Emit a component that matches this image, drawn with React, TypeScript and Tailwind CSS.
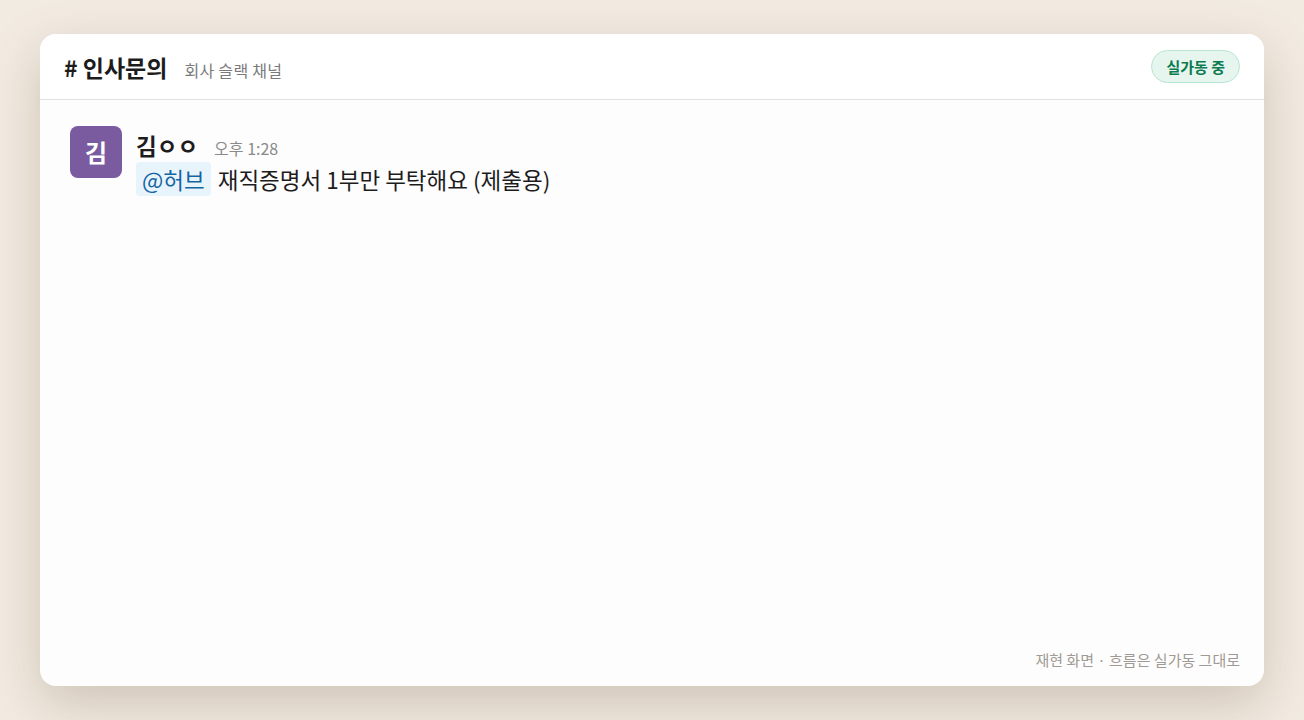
import React from 'react';

const font = { fontFamily: '"Noto Sans CJK KR", "Noto Sans", sans-serif' };

const ChannelHeader: React.FC = () => (
  <div className="flex h-[66px] items-center justify-between border-b border-[#e2e2e2] bg-white px-6">
    <div className="flex items-baseline gap-[17px]">
      <h1 className="text-[23px] font-bold leading-[32px] text-[#1d1c1d]"># 인사문의</h1>
      <span className="text-[16px] tracking-[0.3px] text-[#7a7a7a]">회사 슬랙 채널</span>
    </div>
    <span className="rounded-full border border-[#b9e3d2] bg-[#e6f6ef] px-[14px] py-[6px] text-[15px] font-bold leading-[19px] text-[#0d7a4f]">
      실가동 중
    </span>
  </div>
);

const Message: React.FC = () => (
  <div className="flex gap-[14px] px-[30px] pt-[26px]">
    <div className="flex h-[52px] w-[52px] shrink-0 items-center justify-center rounded-[8px] bg-[#7b5ba0] text-[24px] font-bold text-white">
      김
    </div>
    <div className="flex flex-col">
      <div className="flex h-[36px] items-baseline gap-[16px] leading-[38px]">
        <span className="text-[22.5px] font-bold text-[#1d1c1d]">김ㅇㅇ</span>
        <span className="text-[16px] text-[#8a8a8a]">오후 1:28</span>
      </div>
      <div className="flex items-center gap-[7px] text-[22.5px] leading-[30px] text-[#1d1c1d]">
        <span className="rounded-[4px] bg-[#e8f4fb] px-[6px] py-[2px] text-[#1264a3]">@허브</span>
        <span>재직증명서 1부만 부탁해요 (제출용)</span>
      </div>
    </div>
  </div>
);

export default function App() {
  return (
    <div
      className="min-h-[720px] bg-[#f2ebe2] px-10 pb-[34px] pt-[34px]"
      style={font}
    >
      <div className="flex h-[652px] flex-col overflow-hidden rounded-[16px] bg-[#fdfdfd] shadow-[0_18px_50px_rgba(120,95,70,0.28)]">
        <ChannelHeader />
        <div className="flex-1">
          <Message />
        </div>
        <div className="px-6 pb-[15px] text-right text-[15px] text-[#a09a94]">
          재현 화면 · 흐름은 실가동 그대로
        </div>
      </div>
    </div>
  );
}
